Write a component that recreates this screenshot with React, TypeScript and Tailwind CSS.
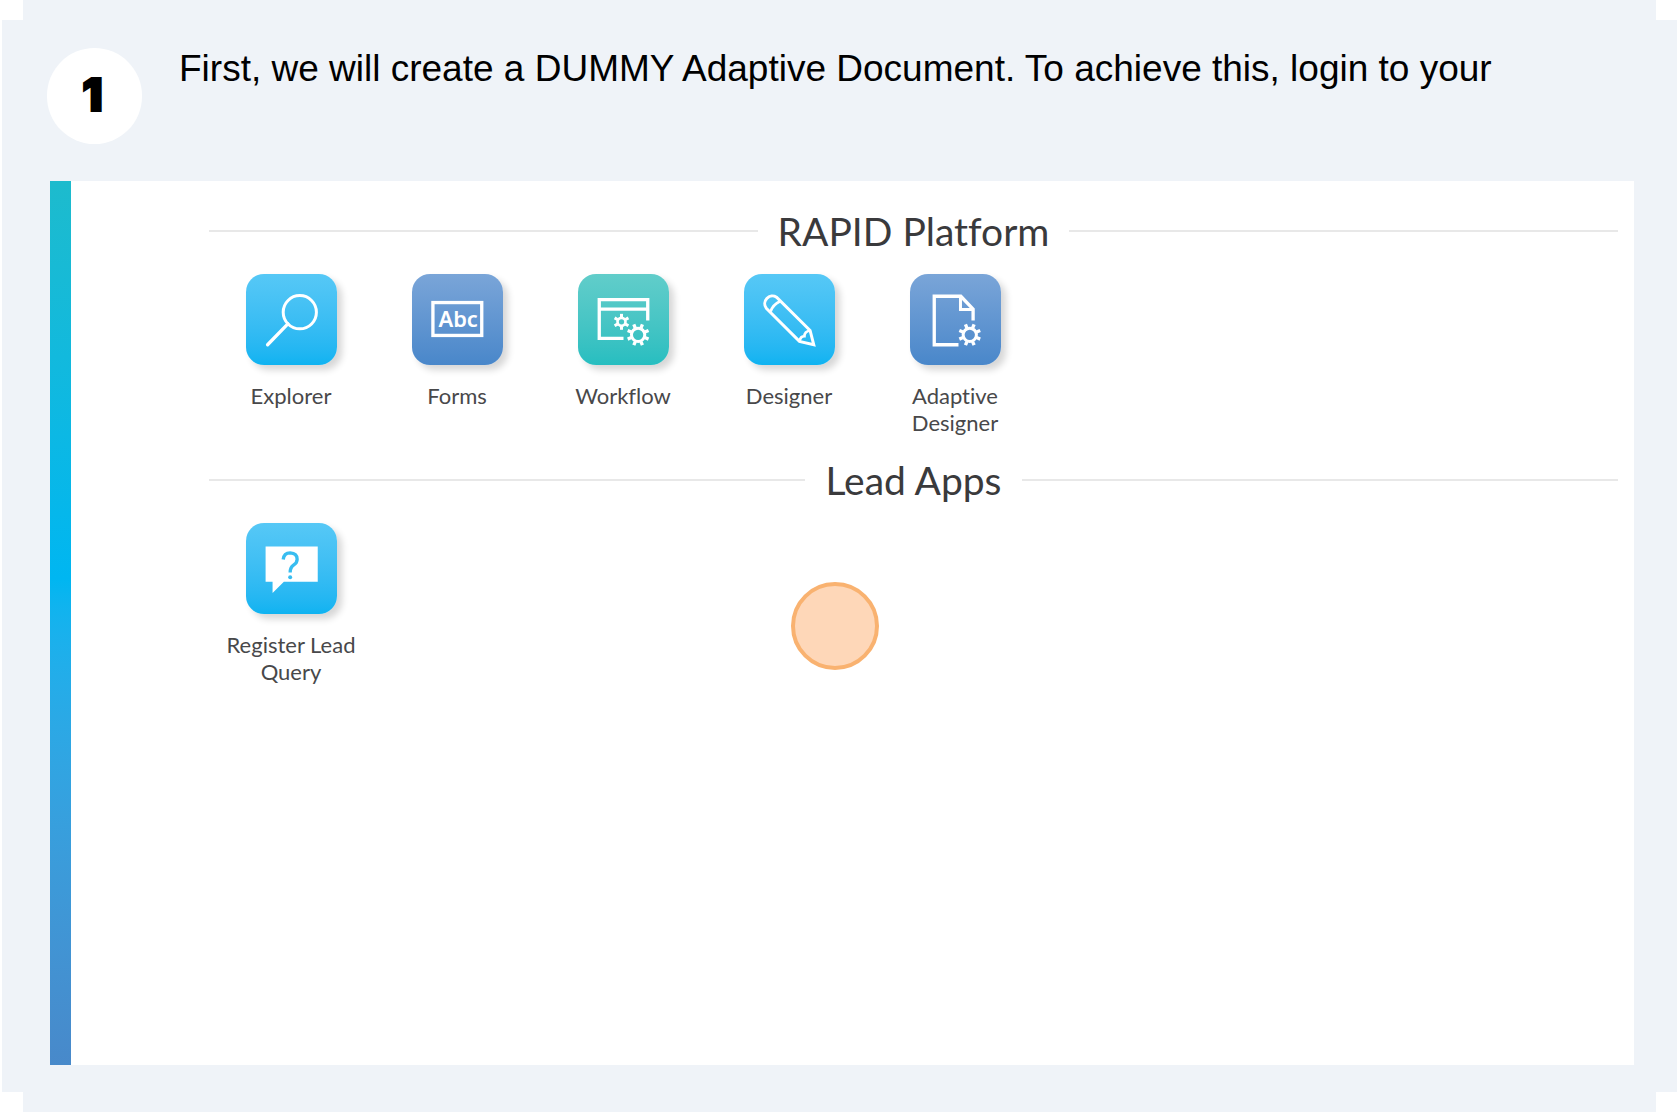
import type { ReactNode } from "react";

const BLUE = "bg-linear-to-b from-[#56c8f6] to-[#0eb3f1]";
const INDIGO = "bg-linear-to-b from-[#7aa5d8] to-[#4987ca]";
const TEAL = "bg-linear-to-b from-[#61cdca] to-[#26bec0]";

function Gear({ x, y, radius, tooth, teeth, offset, width }: { x: number; y: number; radius: number; tooth: number; teeth: number; offset: number; width: number }) {
  return (
    <g transform={`translate(${x} ${y})`}>
      <circle r={radius} strokeWidth={width} />
      {Array.from({ length: teeth }, (_, i) => (
        <line key={i} x1={radius + 2} x2={tooth} y1={0} y2={0} strokeWidth={width + 1} transform={`rotate(${offset + (i * 360) / teeth})`} />
      ))}
    </g>
  );
}

const explorer = (
  <>
    <circle cx="162" cy="115" r="50" />
    <path d="M126 150 L65 213" strokeWidth="10" strokeLinecap="round" />
  </>
);

const forms = (
  <>
    <rect x="63" y="86" width="147" height="99" strokeWidth="10" />
    <text x="139" y="159" textAnchor="middle" fill="white" stroke="none" fontSize="66" fontWeight="600" fontFamily="'Noto Sans', sans-serif">
      Abc
    </text>
  </>
);

const workflow = (
  <>
    <path d="M137 194 H64 V77 H210 V140 M64 106 H210" strokeWidth="10" />
    <Gear x={131} y={144} radius={12} tooth={24} teeth={6} offset={30} width={8} />
    <Gear x={181} y={183} radius={20} tooth={34} teeth={8} offset={22.5} width={9} />
  </>
);

const designer = (
  <>
    <path d="M67 103 L167 203 L210 213 L199 170 L98 70 A23 23 0 0 0 67 103 Z" />
    <path d="M80 113 Q87 92 109 82 M167 203 Q170 187 182 187 Q182 173 199 170" strokeWidth="8" />
  </>
);

const adaptive = (
  <>
    <path d="M146 213 H73 V67 H153 L190 106 V140" strokeWidth="10" />
    <path d="M152 67 V107 H190" strokeWidth="9" />
    <Gear x={180} y={183} radius={20} tooth={34} teeth={8} offset={22.5} width={9} />
  </>
);

const query = (
  <>
    <path d="M59 71 H216 V177 H114 L80 211 V177 H59 Z" fill="white" stroke="none" />
    <path d="M112 110 Q114 90 133 90 Q154 91 154 109 Q154 120 143 127 Q133 134 133 149" stroke="#38bdf0" strokeWidth="10" />
    <circle cx="133" cy="163" r="6" fill="#38bdf0" stroke="none" />
  </>
);

function AppTile({ label, tone, children }: { label: string; tone: string; children: ReactNode }) {
  return (
    <button type="button" className="flex w-[166px] flex-col items-center px-4">
      <span className={`size-[91px] rounded-[18px] shadow-[5px_5px_7px_rgba(0,0,0,0.16)] ${tone}`}>
        <svg viewBox="0 0 274 274" className="size-full" fill="none" stroke="white" strokeWidth="9" aria-hidden="true">
          {children}
        </svg>
      </span>
      <span className="mt-[17px] text-[22px] leading-[27px] text-[#48484a]">{label}</span>
    </button>
  );
}

function Section({ title, children }: { title: string; children: ReactNode }) {
  return (
    <section>
      <div className="flex items-center gap-5">
        <span className="h-[2px] flex-1 bg-[#e8e8e8]" />
        <h2 className="text-[39px] leading-[48px] text-[#3a3a3c]">{title}</h2>
        <span className="h-[2px] flex-1 bg-[#e8e8e8]" />
      </div>
      <div className="mt-[19px] -ml-px flex">{children}</div>
    </section>
  );
}

export default function App() {
  return (
    <main className="bg-white pr-[3px] pb-1 pl-[2px] font-['Liberation_Sans',sans-serif]">
      <div className="relative bg-[#eff3f8] pr-[43px] pb-[47px] pl-12">
        <span className="absolute top-0 left-0 h-5 w-[21px] bg-white" />
        <span className="absolute top-0 right-0 h-5 w-[21px] bg-white" />
        <span className="absolute bottom-0 left-0 h-5 w-[21px] bg-white" />
        <span className="absolute right-0 bottom-0 h-5 w-[21px] bg-white" />

        <header className="-ml-[3px] flex items-start pt-12 pb-[37px]">
          <span className="flex h-24 w-[95px] shrink-0 items-center justify-center rounded-full bg-white pr-1 pb-1 font-[Inter,sans-serif] text-[46px] font-black text-black [-webkit-text-stroke:2px_black]">1</span>
          <h1 className="ml-[37px] text-[37px] leading-[42px] text-black">First, we will create a DUMMY Adaptive Document. To achieve this, login to your</h1>
        </header>

        <div className="relative flex min-h-[884px] bg-white font-[Lato,sans-serif] [font-variant-ligatures:no-common-ligatures]">
          <span className="w-[21px] shrink-0 bg-linear-to-b from-[#1dbbcd] via-[#00b6f1] via-45% to-[#4889ca]" />
          <div className="flex flex-1 flex-col gap-5 pt-[26px] pr-4 pl-[138px]">
            <Section title="RAPID Platform">
              <AppTile label="Explorer" tone={BLUE}>{explorer}</AppTile>
              <AppTile label="Forms" tone={INDIGO}>{forms}</AppTile>
              <AppTile label="Workflow" tone={TEAL}>{workflow}</AppTile>
              <AppTile label="Designer" tone={BLUE}>{designer}</AppTile>
              <AppTile label="Adaptive Designer" tone={INDIGO}>{adaptive}</AppTile>
            </Section>
            <Section title="Lead Apps">
              <AppTile label="Register Lead Query" tone={BLUE}>{query}</AppTile>
            </Section>
          </div>
          <span className="absolute top-[401px] left-[741px] size-[88px] rounded-full border-4 border-[#f9b270] bg-[#fed7b8]" />
        </div>
      </div>
    </main>
  );
}
